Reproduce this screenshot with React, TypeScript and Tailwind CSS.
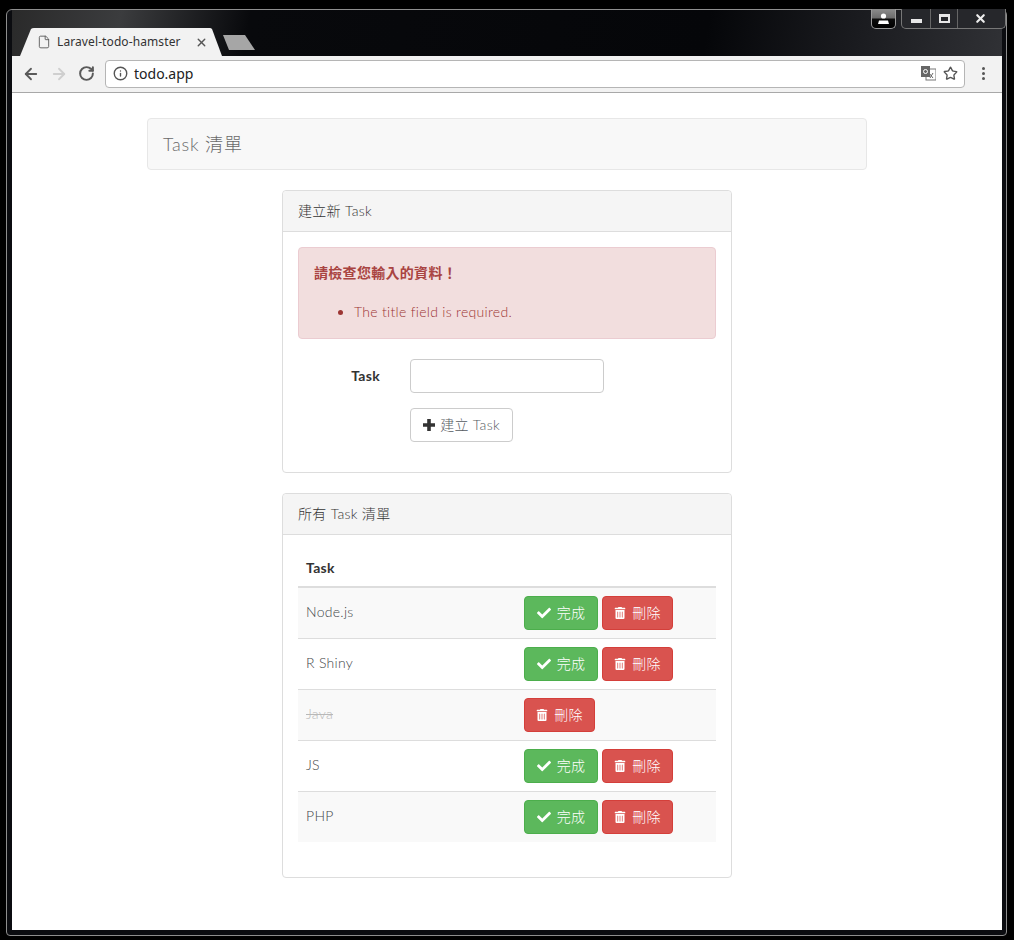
import React from "react";
import { ArrowLeft, ArrowRight, RotateCw, Info, Star, File, X } from "lucide-react";
import { FaCheck, FaTrashAlt } from "react-icons/fa";

const tasks = [
  { name: "Node.js", done: false },
  { name: "R Shiny", done: false },
  { name: "Java", done: true },
  { name: "JS", done: false },
  { name: "PHP", done: false },
];

const pageFont = "font-['Lato','Noto_Sans_CJK_TC',sans-serif] font-light tracking-[0.3px]";

const DoneButton = () => (
  <button className="flex h-[34px] w-[74px] items-center justify-center gap-[6px] rounded border border-[#4cae4c] bg-[#5cb85c] text-sm text-white">
    <FaCheck className="size-[14px]" />
    <span>完成</span>
  </button>
);

const DeleteButton = () => (
  <button className="flex h-[34px] w-[71px] items-center justify-center gap-[6px] rounded border border-[#d43f3a] bg-[#d9534f] text-sm text-white">
    <FaTrashAlt className="size-3" />
    <span>刪除</span>
  </button>
);

const Panel = ({ title, children }: { title: string; children: React.ReactNode }) => (
  <div className="mx-auto w-[450px] rounded border border-[#dddddd] bg-white">
    <div className="flex h-[41px] items-center rounded-t border-b border-[#dddddd] bg-[#f5f5f5] px-[15px] text-sm text-[#333333]">
      {title}
    </div>
    <div className="p-[15px]">{children}</div>
  </div>
);

const BrowserChrome = () => (
  <>
    <div className="relative h-[46px] bg-[linear-gradient(100deg,#2a2a2a_0%,#3b3c3e_11%,#08090c_24%,#050609_70%,#1a1b1f_85%,#303135_100%)] pl-2 pt-[18px]">
      <div className="relative flex h-7 w-[202px] items-center pl-[17px]">
        <svg className="absolute inset-0" width="202" height="28" viewBox="0 0 202 28">
          <path d="M0 28 L11 1 Q12 0 14 0 L190 0 Q191 0 192 1 L202 28 Z" fill="#f2f2f2" />
        </svg>
        <File className="relative size-[14px] text-[#555555]" strokeWidth={1.5} />
        <span className="relative ml-[6px] font-['Noto_Sans',sans-serif] text-xs tracking-[0.1px] text-[#333333]">Laravel-todo-hamster</span>
        <X className="absolute left-[175px] top-[8px] size-[13px] text-[#555555]" strokeWidth={2.5} />
      </div>
      <svg className="absolute left-[211px] top-[25px]" width="32" height="15" viewBox="0 0 32 15">
        <path d="M0 0 H22 L32 15 H6 Z" fill="#a6a6a6" />
      </svg>
    </div>

    <div className="flex h-[37px] items-center border-b border-[#a8a8a8] bg-[#f2f2f2] pb-px">
      <ArrowLeft className="ml-[10px] size-[18px] text-[#5a5a5a]" strokeWidth={2.4} />
      <ArrowRight className="ml-[10px] size-[18px] text-[#cfcfcf]" strokeWidth={2.4} />
      <RotateCw className="ml-[10px] size-[17px] text-[#5a5a5a]" strokeWidth={2.8} />
      <div className="ml-[10px] flex h-[28px] w-[860px] items-center rounded-sm border border-[#b5b5b5] bg-white pl-[7px] pr-[6px]">
        <Info className="size-[15px] text-[#555555]" strokeWidth={2.2} />
        <span className="ml-[6px] font-['Noto_Sans',sans-serif] text-sm text-[#222222]">todo.app</span>
        <svg className="ml-auto" width="15" height="15" viewBox="0 0 15 15">
          <rect x="5" y="3" width="10" height="11" fill="#fff" stroke="#777" />
          <rect x="0" y="0" width="9" height="11" fill="#666" />
          <circle cx="4.5" cy="5.5" r="2" fill="none" stroke="#fff" />
          <path d="M8 7 L12 12 M12 7 L9 12" stroke="#666" />
        </svg>
        <Star className="ml-[7px] size-[15px] text-[#555555]" strokeWidth={2.2} />
      </div>
      <div className="ml-[17px] flex flex-col gap-[2px]">
        <span className="size-[3px] rounded-full bg-[#555555]" />
        <span className="size-[3px] rounded-full bg-[#555555]" />
        <span className="size-[3px] rounded-full bg-[#555555]" />
      </div>
    </div>
  </>
);

const WindowControls = () => (
  <>
    <div className="absolute left-[871px] top-[9px] flex h-[20px] w-[25px] items-center justify-center rounded-b-[5px] border border-t-0 border-[#9a9a9a] bg-[linear-gradient(#8c8c8c_0%,#6e6e6e_45%,#0b0b0b_55%,#000000_100%)]">
      <svg width="13" height="11" viewBox="0 0 13 11">
        <circle cx="6.5" cy="3" r="2.6" fill="#fff" />
        <path d="M1 11 L2 7.5 L11 7.5 L12 11 Z" fill="#fff" />
      </svg>
    </div>
    <div className="absolute left-[901px] top-[9px] flex h-[20px] w-[105px] rounded-b-[5px] border border-t-0 border-[#777777] bg-[#26272b]">
      <div className="flex w-[29px] items-end justify-center border-r border-[#666666] pb-[5px]">
        <span className="h-1 w-[11px] bg-[#e8e8e8]" />
      </div>
      <div className="flex w-[27px] items-center justify-center border-r border-[#666666]">
        <span className="h-[9px] w-[11px] border-2 border-t-[3px] border-[#e8e8e8]" />
      </div>
      <div className="flex flex-1 items-center justify-center pr-[2px]">
        <X className="size-[13px] text-[#eeeeee]" strokeWidth={4} />
      </div>
    </div>
  </>
);

export default function App() {
  return (
    <div className="relative h-[940px] w-[1014px] overflow-hidden bg-black pb-1 pl-[6px] pr-[7px] pt-[9px]">
      <div className="flex h-full flex-col rounded-t-md rounded-b-sm border border-[#8e8e8e] bg-[#0b0c10] pb-[5px] pl-[5px] pr-1">
        <BrowserChrome />

        <div className={`flex-1 bg-white pt-[25px] text-[#636b6f] ${pageFont}`}>
          <div className="mx-auto mb-5 flex h-[52px] w-[720px] items-center rounded border border-[#e7e7e7] bg-[#f8f8f8] px-[15px] text-lg tracking-[0.8px] text-[#6a6a6a]">
            Task 清單
          </div>

          <div className="mb-5">
            <Panel title="建立新 Task">
              <div className="mb-5 rounded border border-[#ebccd1] bg-[#f2dede] px-[15px] pb-4 pt-[15px] text-sm leading-5 text-[#a94442]">
                <strong className="font-bold">請檢查您輸入的資料！</strong>
                <ul className="mt-[19px] list-disc pl-10 text-[#9c3533]">
                  <li>The title field is required.</li>
                </ul>
              </div>
              <div className="flex items-center">
                <label className="w-[82px] text-right text-sm font-bold text-[#333333]">Task</label>
                <input className="ml-[30px] h-[34px] w-[194px] rounded border border-[#cccccc] bg-white" />
              </div>
              <button className="ml-[112px] mt-[15px] mb-[15px] flex h-[34px] w-[103px] items-center justify-center gap-[5px] rounded border border-[#cccccc] bg-white text-sm text-[#555b5f]">
                <svg className="size-3 text-[#333333]" viewBox="0 0 12 12">
                  <path d="M4.2 0 H7.8 V4.2 H12 V7.8 H7.8 V12 H4.2 V7.8 H0 V4.2 H4.2 Z" fill="currentColor" />
                </svg>
                <span>建立 Task</span>
              </button>
            </Panel>
          </div>

          <Panel title="所有 Task 清單">
            <table className="mb-5 w-full table-fixed border-collapse text-sm">
              <thead>
                <tr className="h-[37px] border-b-2 border-[#dddddd]">
                  <th className="w-[218px] px-2 text-left font-bold text-[#333333]">Task</th>
                  <th />
                </tr>
              </thead>
              <tbody>
                {tasks.map((task, i) => (
                  <tr key={task.name} className={`h-[51px] border-t border-[#dddddd] ${i % 2 === 0 ? "bg-[#f9f9f9]" : "bg-white"}`}>
                    <td className="px-2 pb-[2px] text-[#3f4649]">
                      {task.done ? <s className="text-[#b8b8b8]">{task.name}</s> : task.name}
                    </td>
                    <td className="px-2">
                      <div className="flex gap-1">
                        {!task.done && <DoneButton />}
                        <DeleteButton />
                      </div>
                    </td>
                  </tr>
                ))}
              </tbody>
            </table>
          </Panel>
        </div>
      </div>
      <WindowControls />
    </div>
  );
}
